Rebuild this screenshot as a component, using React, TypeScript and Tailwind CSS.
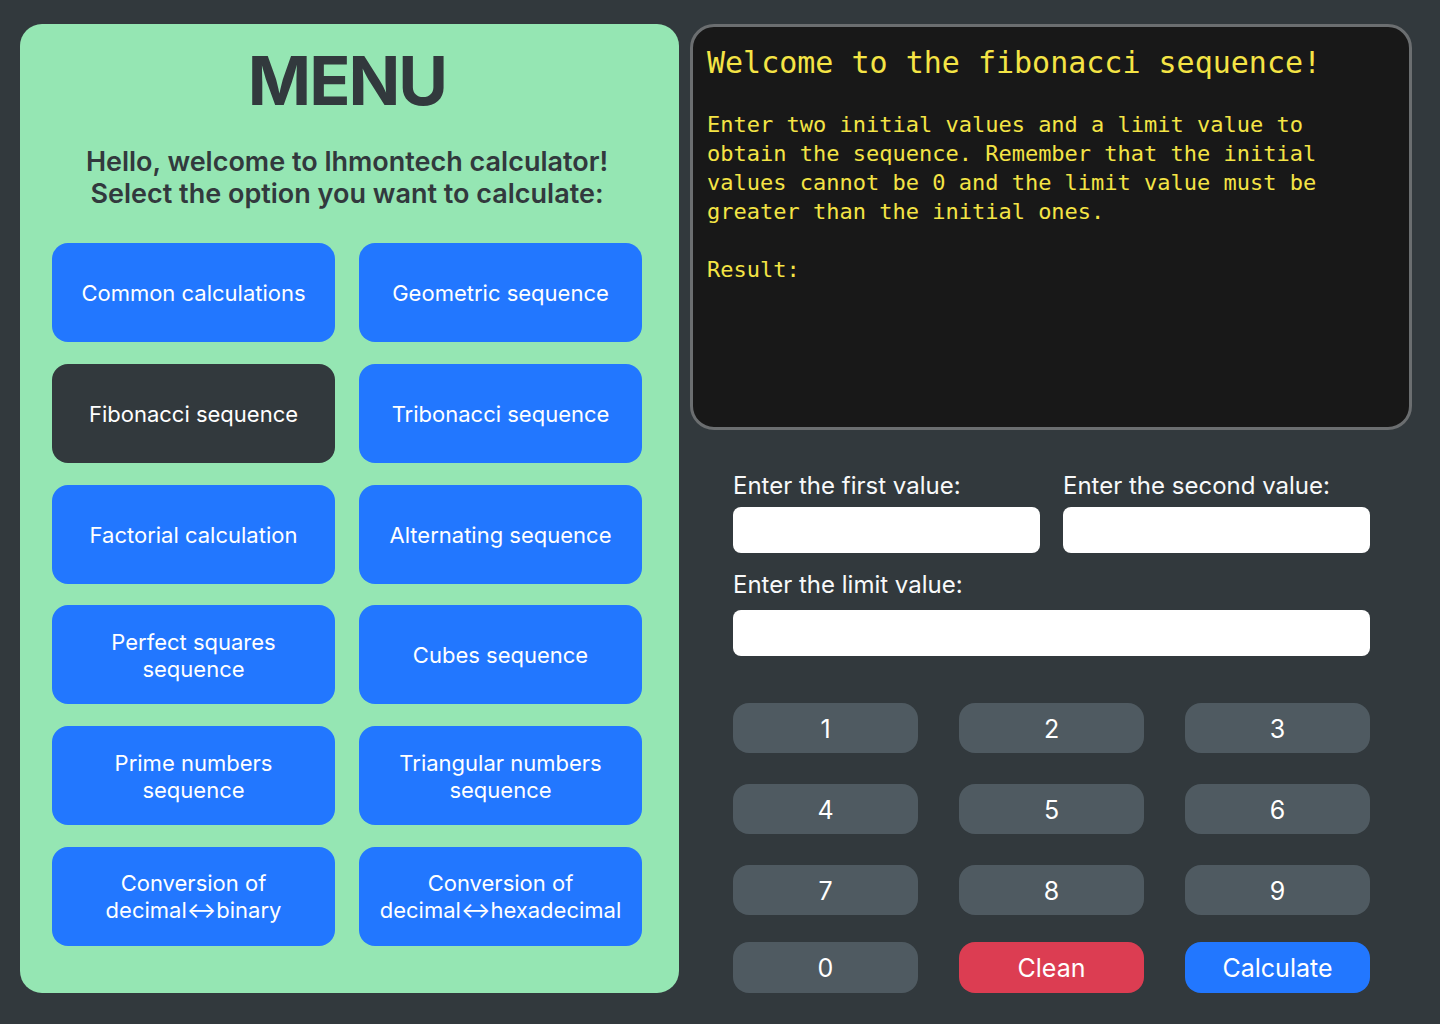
import React from "react";

const options = [
  "Common calculations",
  "Geometric sequence",
  "Fibonacci sequence",
  "Tribonacci sequence",
  "Factorial calculation",
  "Alternating sequence",
  "Perfect squares sequence",
  "Cubes sequence",
  "Prime numbers sequence",
  "Triangular numbers sequence",
  "Conversion of decimal↔binary",
  "Conversion of decimal↔hexadecimal",
];

const labels: Record<string, React.ReactNode> = {
  "Perfect squares sequence": (
    <>
      Perfect squares
      <br />
      sequence
    </>
  ),
  "Prime numbers sequence": (
    <>
      Prime numbers
      <br />
      sequence
    </>
  ),
  "Triangular numbers sequence": (
    <>
      Triangular numbers
      <br />
      sequence
    </>
  ),
  "Conversion of decimal↔binary": (
    <>
      Conversion of
      <br />
      decimal↔binary
    </>
  ),
  "Conversion of decimal↔hexadecimal": (
    <>
      Conversion of
      <br />
      decimal↔hexadecimal
    </>
  ),
};

const keyRows = [
  ["1", "2", "3"],
  ["4", "5", "6"],
  ["7", "8", "9"],
];

export default function App() {
  const selected = "Fibonacci sequence";

  return (
    <div className="min-h-[1024px] w-[1440px] bg-[#32393d] pt-[24px] pl-[20px] flex gap-[11px] font-['Inter',sans-serif]">
      {/* Menu */}
      <section className="w-[659px] h-[969px] bg-[#95e6b3] rounded-[22px] pt-[21px] pl-[32px] pr-[37px] flex flex-col items-center">
        <h1 className="text-[68px] leading-[70px] font-bold text-[#32393d] tracking-[-2px]">MENU</h1>
        <p className="mt-[31px] text-[27px] leading-[32px] font-semibold text-[#32393d] text-center">
          Hello, welcome to lhmontech calculator!
          <br />
          Select the option you want to calculate:
        </p>
        <div className="mt-[33px] grid grid-cols-2 gap-x-[24px] gap-y-[21.8px] w-full">
          {options.map((opt) => (
            <button
              key={opt}
              className={`h-[99px] rounded-[16px] text-white text-[22px] leading-[27px] pt-[2px] flex items-center justify-center text-center ${
                opt === selected ? "bg-[#32393d]" : "bg-[#2277ff]"
              }`}
            >
              <span>{labels[opt] ?? opt}</span>
            </button>
          ))}
        </div>
      </section>

      {/* Calculator */}
      <section className="w-[722px] flex flex-col">
        <div className="h-[406px] bg-[#181818] border-[3px] border-[#6b6e70] rounded-[24px] pt-[18px] pl-[14px] pr-[14px] text-[#f4e445] font-['DejaVu_Sans_Mono',monospace]">
          <h2 className="text-[30px] leading-[36px]">Welcome to the fibonacci sequence!</h2>
          <p className="mt-[29px] text-[22px] leading-[29px] whitespace-pre-line">
            {"Enter two initial values and a limit value to\nobtain the sequence. Remember that the initial\nvalues cannot be 0 and the limit value must be\ngreater than the initial ones."}
          </p>
          <p className="mt-[29px] text-[22px] leading-[29px]">Result:</p>
        </div>

        <div className="px-[43px] pr-[42px] pt-[41px]">
          <div className="grid grid-cols-2 gap-x-[23px]">
            <label className="flex flex-col">
              <span className="text-[24px] leading-[29px] text-[#f8f9fa]">Enter the first value:</span>
              <input className="mt-[7px] h-[46px] bg-white rounded-[8px] outline-none" />
            </label>
            <label className="flex flex-col">
              <span className="text-[24px] leading-[29px] text-[#f8f9fa]">Enter the second value:</span>
              <input className="mt-[7px] h-[46px] bg-white rounded-[8px] outline-none" />
            </label>
          </div>
          <label className="flex flex-col mt-[17px]">
            <span className="text-[24px] leading-[29px] text-[#f8f9fa]">Enter the limit value:</span>
            <input className="mt-[11px] h-[46px] bg-white rounded-[8px] outline-none" />
          </label>

          <div className="mt-[47px] flex flex-col gap-[31px]">
            {keyRows.map((row, i) => (
              <div key={i} className="grid grid-cols-3 gap-x-[41px]">
                {row.map((k) => (
                  <button key={k} className="h-[50px] rounded-[16px] bg-[#4f5a61] text-white text-[25px] pt-[3px]">
                    {k}
                  </button>
                ))}
              </div>
            ))}
          </div>
          <div className="mt-[27px] grid grid-cols-3 gap-x-[41px]">
            <button className="h-[51px] rounded-[16px] bg-[#4f5a61] text-white text-[25px] pt-[2px]">0</button>
            <button className="h-[51px] rounded-[16px] bg-[#dc3d52] text-white text-[25px] pt-[2px]">Clean</button>
            <button className="h-[51px] rounded-[16px] bg-[#2277ff] text-white text-[25px] pt-[2px]">Calculate</button>
          </div>
        </div>
      </section>
    </div>
  );
}
